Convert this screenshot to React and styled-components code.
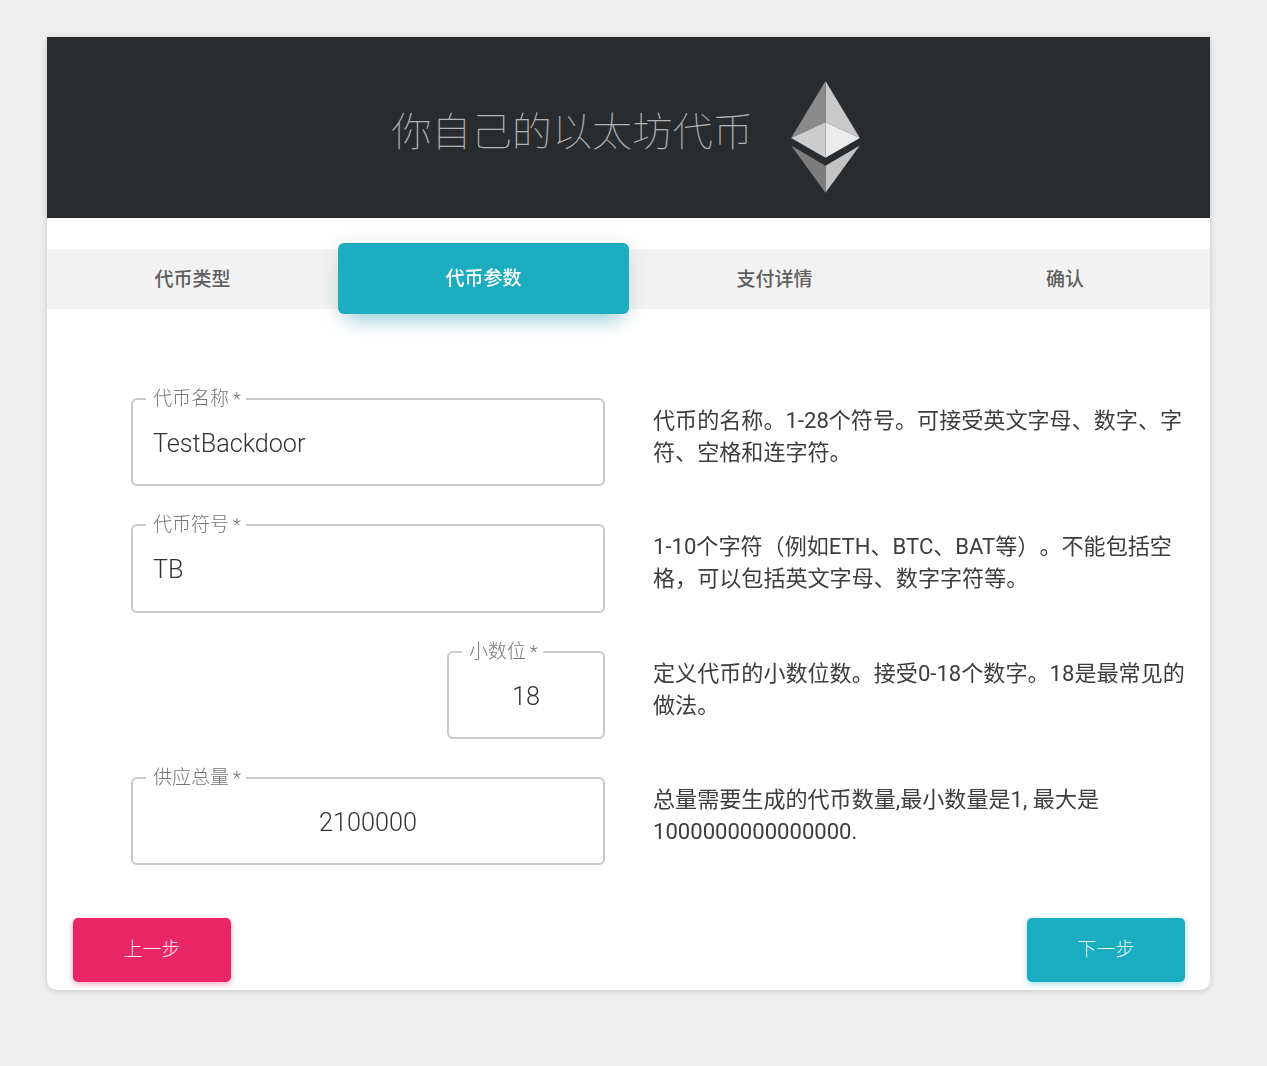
import React from 'react';
import styled, { createGlobalStyle } from 'styled-components';

const GlobalStyle = createGlobalStyle`
  html, body {
    margin: 0;
    background: #eeeeee;
    font-family: Roboto, "Noto Sans CJK SC", sans-serif;
    text-spacing-trim: space-all;
  }
  * { box-sizing: border-box; }
`;

const tabs = ['代币类型', '代币参数', '支付详情', '确认'];

const fields = [
  {
    label: '代币名称 *',
    value: 'TestBackdoor',
    help: '代币的名称。1-28个符号。可接受英文字母、数字、字符、空格和连字符。',
  },
  {
    label: '代币符号 *',
    value: 'TB',
    help: '1-10个字符（例如ETH、BTC、BAT等）。不能包括空格，可以包括英文字母、数字字符等。',
  },
  {
    label: '小数位 *',
    value: '18',
    small: true,
    center: true,
    help: '定义代币的小数位数。接受0-18个数字。18是最常见的做法。',
  },
  {
    label: '供应总量 *',
    value: '2100000',
    center: true,
    help: '总量需要生成的代币数量,最小数量是1, 最大是1000000000000000.',
  },
];

const EthLogo = () => (
  <LogoSvg viewBox="0 0 256 417" aria-hidden="true">
    <polygon fill="#c9c9c9" points="127.9,0 127.9,153.6 255.9,212.3" />
    <polygon fill="#8a8a8a" points="127.9,0 0,212.3 127.9,153.6" />
    <polygon fill="#c4c4c4" points="127.9,237 127.9,416.3 256,240.1 127.9,315.9" />
    <polygon fill="#7d7d7d" points="127.9,416.3 127.9,315.9 0,240.1" />
    <polygon fill="#ececec" points="127.9,286.2 255.9,212.3 127.9,153.6" />
    <polygon fill="#cdcdcd" points="0,212.3 127.9,286.2 127.9,153.6" />
  </LogoSvg>
);

const App = () => {
  return (
    <>
      <GlobalStyle />
      <Page>
        <Card>
          <Header>
            <Title>你自己的以太坊代币</Title>
            <EthLogo />
          </Header>

          <TabBar>
            {tabs.map((tab, i) => (
              <Tab key={tab} $active={i === 1}>
                {tab}
              </Tab>
            ))}
          </TabBar>

          <Form>
            {fields.map((field) => (
              <Row key={field.label}>
                <Outline $small={field.small}>
                  <Legend>{field.label}</Legend>
                  <Input readOnly value={field.value} $center={field.center} />
                </Outline>
                <Help>{field.help}</Help>
              </Row>
            ))}
          </Form>

          <Footer>
            <Button $color="#e92766">上一步</Button>
            <Button $color="#1aadc1">下一步</Button>
          </Footer>
        </Card>
      </Page>
    </>
  );
};

export default App;

const Page = styled.div`
  height: 1066px;
  padding: 37px 57px 0 47px;
  overflow: hidden;
  will-change: opacity;
`;

const Card = styled.div`
  height: 953px;
  background: #fff;
  border-radius: 0 0 10px 10px;
  box-shadow: 0 1px 6px rgba(0, 0, 0, 0.16);
  display: flex;
  flex-direction: column;
`;

const Header = styled.header`
  height: 181px;
  flex: none;
  background: #292c2f;
  display: flex;
  align-items: center;
  justify-content: center;
  gap: 38px;
  padding-right: 6px;
`;

const Title = styled.h1`
  margin: 10px 0 0;
  font-size: 40.2px;
  line-height: 56px;
  font-weight: 100;
  color: #b4b4b4;
`;

const LogoSvg = styled.svg`
  width: 69px;
  height: 112px;
  flex: none;
  margin-top: 18px;
`;

const TabBar = styled.nav`
  height: 60px;
  flex: none;
  margin-top: 31px;
  background: #f3f3f3;
  display: grid;
  grid-template-columns: 291px 291px 291px 1fr;
`;

const Tab = styled.div`
  display: flex;
  align-items: center;
  justify-content: center;
  padding-bottom: 3px;
  font-size: 19px;
  font-weight: 500;
  color: ${(p) => (p.$active ? '#fff' : '#5f5f5f')};
  ${(p) =>
    p.$active &&
    `
    margin: -6px 0 -5px;
    padding-bottom: 4px;
    background: #1cadc1;
    border-radius: 6px;
    box-shadow: 0 14px 20px -10px rgba(26, 173, 193, 0.45), 0 4px 24px rgba(0, 0, 0, 0.11);
    position: relative;
  `}
`;

const Form = styled.div`
  flex: none;
  display: flex;
  flex-direction: column;
  gap: 26.93px;
  padding: 78px 25px 0 84px;
`;

const Row = styled.div`
  display: grid;
  grid-template-columns: 474px 1fr;
  column-gap: 48px;
  align-items: start;
`;

const Outline = styled.fieldset`
  margin: 0;
  padding: 0 20px;
  height: 99.4px;
  min-width: 0;
  border: 2px solid #c9c9c9;
  border-radius: 6px;
  width: ${(p) => (p.$small ? '158px' : '100%')};
  justify-self: end;
`;

const Legend = styled.legend`
  margin-left: -7px;
  padding: 0 5px 0 7px;
  font-size: 19px;
  line-height: 24px;
  font-weight: 300;
  word-spacing: -1px;
  color: #757575;
`;

const Input = styled.input`
  display: block;
  width: 100%;
  height: 65px;
  padding: 0;
  margin: 0;
  border: 0;
  outline: 0;
  background: transparent;
  font-family: inherit;
  font-size: 25.2px;
  font-weight: 300;
  color: #333;
  text-align: ${(p) => (p.$center ? 'center' : 'left')};
`;

const Help = styled.p`
  margin: 18px 0 0;
  font-size: 22.08px;
  line-height: 32px;
  color: #3d3d3d;
`;

const Footer = styled.div`
  display: flex;
  justify-content: space-between;
  padding: 52.6px 25px 0 26px;
`;

const Button = styled.button`
  width: 158px;
  height: 64px;
  padding: 0 0 5px;
  border: 0;
  border-radius: 5px;
  background: ${(p) => p.$color};
  box-shadow: 0 2px 6px ${(p) => p.$color}66;
  color: rgba(255, 255, 255, 0.9);
  font-family: inherit;
  font-size: 19px;
  font-weight: 300;
  cursor: pointer;
`;
